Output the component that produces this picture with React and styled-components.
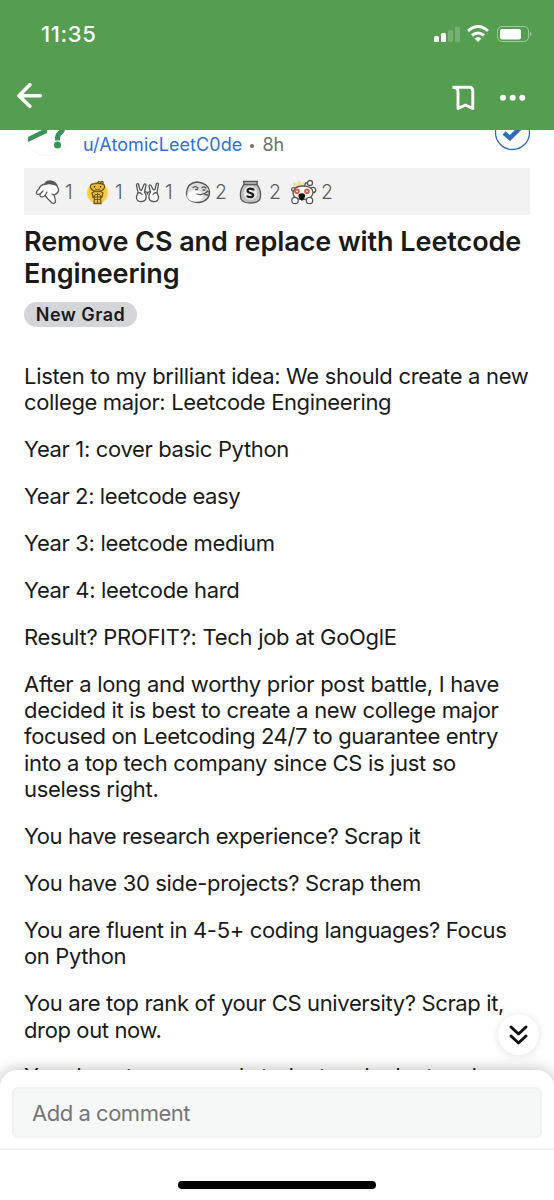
import React from "react";
import styled, { createGlobalStyle } from "styled-components";

const Global = createGlobalStyle`
  * { box-sizing: border-box; }
  body { margin: 0; background: #fff; font-family: Inter, "Liberation Sans", sans-serif; color: #1a1a1b; }
`;
const Screen = styled.main`
  position: relative;
  width: 554px;
  height: 1200px;
  overflow: hidden;
  display: flex;
  flex-direction: column;
  background: #fff;
`;
const Header = styled.header`
  flex: none;
  height: 130px;
  background: #549d51;
  color: #fff;
`;
const StatusBar = styled.div`
  height: 68px;
  padding: 0 21px 0 41px;
  display: flex;
  align-items: center;
  justify-content: space-between;
`;
const Clock = styled.span`
  font-size: 22px;
  font-weight: 500;
  letter-spacing: 0.6px;
`;
const StatusIcons = styled.svg`
  display: block;
  width: 100px;
  height: 20px;
`;
const NavBar = styled.nav`
  height: 58px;
  padding: 0 28px 0 16px;
  display: flex;
  align-items: center;
`;
const BackIcon = styled.svg`
  width: 28px;
  height: 28px;
  margin-right: auto;
`;
const NavActions = styled.svg`
  width: 76px;
  height: 30px;
`;
const Post = styled.article`
  flex: 1;
  min-height: 0;
  overflow: hidden;
  padding: 0 24px;
`;
const AuthorRow = styled.div`
  height: 38px;
  display: flex;
  align-items: flex-start;
`;
const Avatar = styled.svg`
  width: 48px;
  height: 27px;
  flex: none;
`;
const Byline = styled.div`
  margin: 3px 0 0 11px;
  font-size: 18px;
  line-height: 23px;
  color: #6d6f71;
  white-space: nowrap;
  display: flex;
  align-items: center;
`;
const Author = styled.span`
  color: #3071cf;
  letter-spacing: 0.08px;
`;
const Dot = styled.i`
  width: 4px;
  height: 4px;
  margin: 2px 8px 0;
  border-radius: 50%;
  background: #6d6f71;
`;
const Joined = styled.svg`
  width: 36px;
  height: 24px;
  margin-left: auto;
`;
const Awards = styled.div`
  height: 47px;
  background: #f2f2f2;
  padding-left: 11px;
  display: flex;
  align-items: center;
`;
const Award = styled.div`
  width: ${(p) => p.$w}px;
  display: flex;
  align-items: center;
  gap: 4px;
  font-size: 19.5px;
  font-weight: 300;
  color: #5c5e60;
`;
const AwardIcon = styled.svg`
  width: 26px;
  height: 26px;
  flex: none;
  overflow: visible;
`;
const Title = styled.h1`
  margin: 11px 0 0;
  font-size: 27px;
  line-height: 32px;
  font-weight: 600;
`;
const Line = styled.span`
  display: block;
  white-space: nowrap;
  letter-spacing: ${(p) => p.$track || 0}px;
`;
const Flair = styled.span`
  margin-top: 12px;
  width: 113px;
  height: 25px;
  border-radius: 13px;
  background: #d4d5d9;
  display: flex;
  align-items: center;
  justify-content: center;
  font-size: 18px;
  font-weight: 600;
  letter-spacing: 0.45px;
`;
const Body = styled.div`
  margin-top: 36px;
`;
const Paragraph = styled.p`
  margin: 0 0 20.4px;
  font-size: 22px;
  line-height: 26.45px;
`;
const JumpButton = styled.button`
  position: absolute;
  left: 498px;
  top: 1014px;
  width: 41px;
  height: 41px;
  padding: 0;
  border: 0;
  border-radius: 50%;
  background: #fff;
  box-shadow: 0 1px 8px rgba(0, 0, 0, 0.12);
  svg { display: block; }
`;
const Composer = styled.footer`
  position: relative;
  flex: none;
  height: 130px;
  padding-top: 17px;
  background: #fff;
  border-radius: 17px 17px 0 0;
  box-shadow: 0 0 16px rgba(0, 0, 0, 0.28);
  display: flex;
  flex-direction: column;
  align-items: center;
`;
const Field = styled.div`
  width: 530px;
  height: 51px;
  border: 2px solid #f0f1f3;
  border-radius: 6px;
  background: #f6f7f7;
  padding-left: 18px;
  display: flex;
  align-items: center;
  font-size: 22px;
  color: #757678;
  letter-spacing: -0.47px;
`;
const Divider = styled.div`
  width: 100%;
  height: 2px;
  margin-top: 10px;
  background: #f0f0f1;
`;
const HomeIndicator = styled.div`
  width: 198px;
  height: 8px;
  margin-top: 31px;
  border-radius: 4px;
  background: #000;
`;

const ink = { stroke: "#56585a", strokeWidth: 1.3, strokeLinejoin: "round", strokeLinecap: "round" };

const awards = [
  { id: "hand", count: 1, w: 50, art: (
    <g {...ink} fill="#fff">
      <path d="M10 5Q5 6 4 10Q1 12 1.500 14.500Q2.500 16 5 15Q4.500 18 7 18Q9 18 10 16.500L13 20Q15 22 17 24Q20 25 20.500 22.500Q20 18 19 16Q24 14 23.500 10L21.500 6Q16 3 10 5Z" />
      <path d="M10 5Q11 2 15 2Q20 2.500 22 6.500Q16 3.500 10 5Z" fill="#55585c" />
      <path d="M5 15L8 12M10 16.500L12 13M19 16L17 15" fill="none" />
    </g>) },
  { id: "gold", count: 1, w: 50, art: (
    <g stroke="#73591c" strokeWidth="1.300" fill="#e9bb3a">
      <circle cx="12.500" cy="14" r="10.500" stroke="#f5dc83" strokeWidth="1" fill="#f6cc45" />
      <path d="M12.500 5L13.500 2.500L16.500 3.500" fill="none" />
      <circle cx="17" cy="3.500" r="1.200" />
      <path d="M10 12H15L18 14L17 18L15.500 17L16 24.500H9L9.500 17L8 18L7 14Z" />
      <path d="M5.500 8.500Q5 5 8 5Q13 3.500 17 5Q20 5 19.500 8.500Q18 12.500 12.500 12.500Q7 12.500 5.500 8.500Z" />
      <path d="M10 15.500H15M10 18H15M10 20.500H15M12.500 14V24M10 10Q12.500 11.500 15 10" fill="none" strokeWidth="1" />
      <path d="M9.500 7V8.600M15.500 7V8.600" stroke="#342c17" />
    </g>) },
  { id: "hands", count: 1, w: 50, art: (
    <g {...ink} fill="#f9f9f9">
      <path d="M1.500 6Q2 4 3.500 5L5 11L6.500 11.500L9 5.500Q10.500 4 11 6L9.500 13L11 16Q12 22 7 22.500Q1 23 1.500 17.500L3 13.500Z" />
      <path d="M23.500 5Q23 3.500 21.500 4.500L20 10.500L18.500 11L16 6.500Q14.500 5 14 7L15.500 13L14 16Q13 22 18 22.500Q24 23 23.500 17.500L22 13.500Z" />
      <path d="M9.500 13Q12 12 12.500 15Q13 12 15.500 13M3 14Q5.500 13 7 15.500M22 14Q19.500 13 18 15.500" fill="none" />
    </g>) },
  { id: "smirk", count: 2, w: 54, art: (
    <g {...ink} fill="#dededf">
      <path d="M1.500 14Q2 4 12 3Q23 4 24.500 12Q25 22 14 23.500Q2 23.500 1.500 14Z" />
      <ellipse cx="10" cy="17" rx="8" ry="5.800" fill="#fafafa" stroke="none" />
      <path d="M8 8.500Q11 6.500 13 9M17 8.500Q19 7 21 9M10.500 10.500H12.500M18 11H20M12 15Q18 17 22.500 12.500M20 15.500L23 16M22 12L24 13" fill="none" />
    </g>) },
  { id: "silver", count: 2, w: 52, art: (
    <g {...ink} fill="#c3c3c4">
      <path d="M4.500 2.500H18.500L17.500 6H5.500Z" />
      <path d="M5 5.500H18Q23 12 21 20Q19 24 11.500 24Q4 24 2 20Q0 12 5 5.500Z" />
      <circle cx="11.500" cy="14" r="7.500" fill="#e6e6e7" stroke="#aaa" strokeWidth=".7" />
      <path d="M14.500 10.500Q9 8.500 8.500 11.500Q8.500 13.500 11.500 14Q15 15 14 17Q12.500 19 8.500 17.500" fill="none" stroke="#18191a" strokeWidth="2.200" />
    </g>) },
  { id: "snoo", count: 2, w: 54, art: (
    <g {...ink} fill="#fff">
      <path d="M3 9L2 3L6 5L8 1L11 5L14 2L14 8Z" fill="#f4dc9c" stroke="none" />
      <path d="M13.500 8L14.500 4L18 3.500" fill="none" />
      <circle cx="19" cy="4" r="2.500" /><circle cx="22" cy="11" r="2.700" /><circle cx="2.500" cy="10.500" r="1.800" />
      <path d="M3 11Q5 7 12 7Q21 7 22 13Q22 20 12 20.500Q2 20 2 14Z" />
      <g fill="#dd5a45" stroke="none"><circle cx="6" cy="12.300" r="2.800" /><circle cx="16" cy="12.300" r="2.800" /></g>
      <g fill="#fff" stroke="none"><circle cx="6" cy="12.300" r=".9" /><circle cx="16" cy="12.300" r=".9" /></g>
      <path d="M8 16Q11 14 13.500 16Q13.500 19.500 10.800 21Q8 19.500 8 16Z" fill="#111" stroke="#111" />
      <circle cx="4" cy="21.500" r="3.200" /><circle cx="18.500" cy="21.500" r="3.200" />
    </g>) },
];

const paragraphs = [
  [["Listen to my brilliant idea: We should create a new", -0.31], ["college major: Leetcode Engineering", -0.37]],
  [["Year 1: cover basic Python", -0.35]],
  [["Year 2: leetcode easy", -0.4]],
  [["Year 3: leetcode medium", -0.35]],
  [["Year 4: leetcode hard", -0.35]],
  [["Result? PROFIT?: Tech job at GoOglE", -0.29]],
  [["After a long and worthy prior post battle, I have", -0.28], ["decided it is best to create a new college major", -0.32], ["focused on Leetcoding 24/7 to guarantee entry", -0.37], ["into a top tech company since CS is just so", -0.33], ["useless right.", -0.33]],
  [["You have research experience? Scrap it", -0.41]],
  [["You have 30 side-projects? Scrap them", -0.33]],
  [["You are fluent in 4-5+ coding languages? Focus", -0.34], ["on Python", -0.37]],
  [["You are top rank of your CS university? Scrap it,", -0.36], ["drop out now.", -0.38]],
  [["You do not even need student and adept and", -0.33]],
];

export default function App() {
  return (
    <Screen>
      <Global />
      <Header>
        <StatusBar>
          <Clock>11:35</Clock>
          <StatusIcons viewBox="0 0 100 20" fill="#fff">
            <rect x="1" y="12" width="5" height="6" rx="1.500" /><rect x="8" y="9" width="5" height="9" rx="1.500" />
            <g opacity=".2"><rect x="15" y="6" width="5" height="12" rx="1.500" /><rect x="22" y="2.500" width="5" height="15.500" rx="1.500" /></g>
            <g fill="none" stroke="#fff" strokeWidth="3"><path d="M35 7Q45-2 55 7" /><path d="M39 11.500Q45 6.500 51 11.500" /></g>
            <path d="M41.500 14.500Q45 11.500 48.500 14.500L45 18Z" />
            <rect x="64.500" y="2.500" width="31" height="15" rx="4.500" fill="none" stroke="#fff" strokeOpacity=".45" />
            <rect x="67" y="5" width="21" height="10.500" rx="2" /><path d="M97 7.500Q100 10 97 12.500Z" opacity=".45" />
          </StatusIcons>
        </StatusBar>
        <NavBar>
          <BackIcon viewBox="0 0 28 28" fill="none" stroke="#fff" strokeWidth="3.600" strokeLinecap="round" strokeLinejoin="round"><path d="M13.800 1.700L3 12.700L13.800 23.300M3 12.700H24.300" /></BackIcon>
          <NavActions viewBox="0 0 76 30" fill="none" stroke="#fff" strokeWidth="2.900" strokeLinejoin="round">
            <path d="M2.500 5.200H19Q22.800 5.200 22.800 9V26.500L15.500 23L8 26.500V9.500Q8 5.200 3 5.200" />
            <g fill="#fff" stroke="none"><circle cx="53" cy="15.700" r="3" /><circle cx="62.700" cy="15.700" r="3" /><circle cx="72.300" cy="15.700" r="3" /></g>
          </NavActions>
        </NavBar>
      </Header>
      <Post>
        <AuthorRow>
          <Avatar viewBox="0 0 48 27" fill="none">
            <circle cx="23.500" cy="1.500" r="24" stroke="#f5f5f5" />
            <path d="M4 7L18 0H23V3L4 12Z" fill="#37945a" />
            <path d="M33.500 10.500V7.500Q34 4 37 2Q39 0 39-3" stroke="#37945a" strokeWidth="5" /><circle cx="33.500" cy="15" r="3.600" fill="#37945a" />
          </Avatar>
          <Byline><Author>u/AtomicLeetC0de</Author><Dot />8h</Byline>
          <Joined viewBox="0 0 36 24" fill="none"><circle cx="18.500" cy="2.500" r="17" stroke="#316bbd" strokeWidth="1.300" /><path d="M10 3L16 8L26-2" stroke="#316bbd" strokeWidth="4.500" /></Joined>
        </AuthorRow>
        <Awards>
          {awards.map((a) => <Award key={a.id} $w={a.w}><AwardIcon viewBox="0 0 26 26">{a.art}</AwardIcon>{a.count}</Award>)}
        </Awards>
        <Title><Line $track={-0.07}>Remove CS and replace with Leetcode</Line><Line $track={-0.12}>Engineering</Line></Title>
        <Flair>New Grad</Flair>
        <Body>
          {paragraphs.map((lines, i) => <Paragraph key={i}>{lines.map(([text, track]) => <Line key={text} $track={track}>{text}</Line>)}</Paragraph>)}
        </Body>
      </Post>
      <Composer>
        <Field>Add a comment</Field>
        <Divider />
        <HomeIndicator />
      </Composer>
      <JumpButton aria-label="Next comment">
        <svg width="41" height="41" viewBox="0 0 41 41" fill="none" stroke="#111" strokeWidth="3" strokeLinecap="round" strokeLinejoin="round"><path d="M13 13L20.500 20L28 13M13 22L20.500 29L28 22" /></svg>
      </JumpButton>
    </Screen>
  );
}
